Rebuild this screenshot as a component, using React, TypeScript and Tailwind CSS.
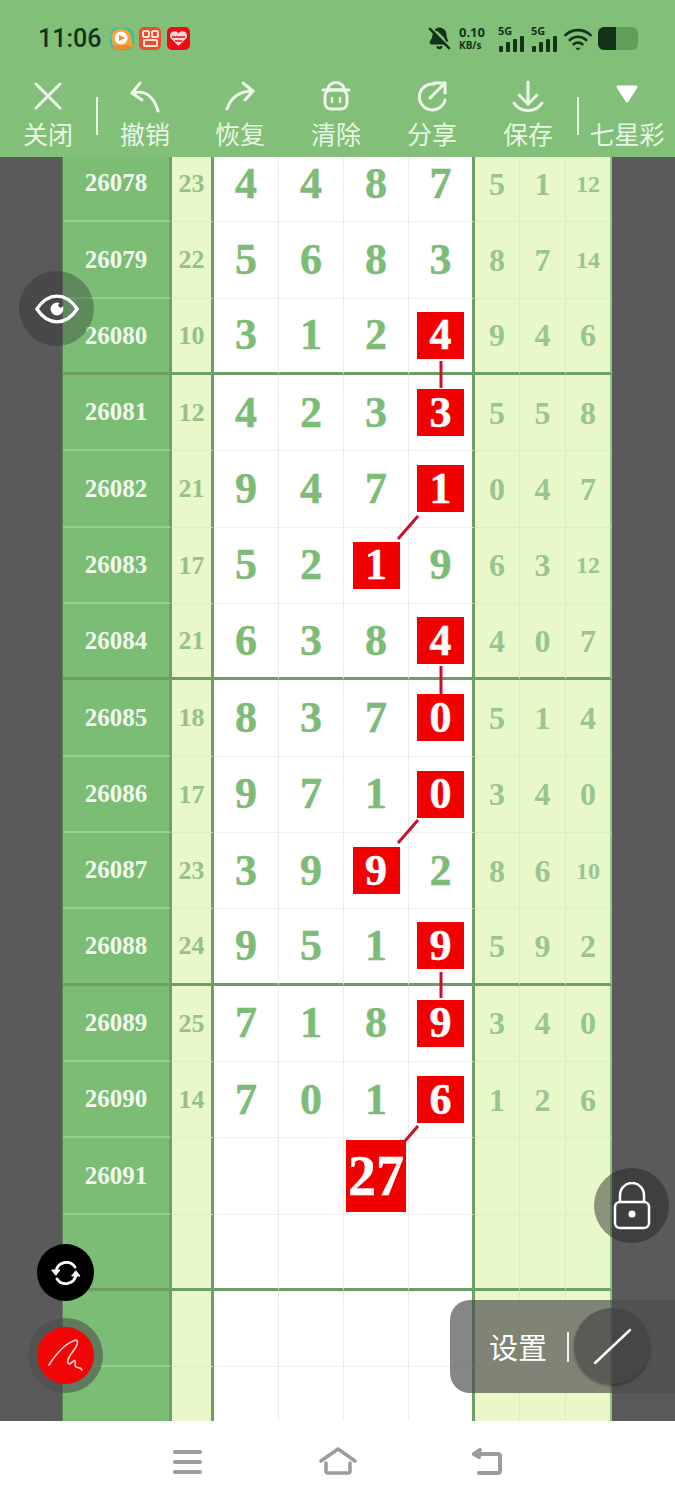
import { BellOff } from 'lucide-react'

type Row = { id?: string; sum?: string; main?: string[]; side?: string[]; hit?: number }

const rows: Row[] = [
  { id: '26078', sum: '23', main: ['4', '4', '8', '7'], side: ['5', '1', '12'] },
  { id: '26079', sum: '22', main: ['5', '6', '8', '3'], side: ['8', '7', '14'] },
  { id: '26080', sum: '10', main: ['3', '1', '2', '4'], side: ['9', '4', '6'], hit: 3 },
  { id: '26081', sum: '12', main: ['4', '2', '3', '3'], side: ['5', '5', '8'], hit: 3 },
  { id: '26082', sum: '21', main: ['9', '4', '7', '1'], side: ['0', '4', '7'], hit: 3 },
  { id: '26083', sum: '17', main: ['5', '2', '1', '9'], side: ['6', '3', '12'], hit: 2 },
  { id: '26084', sum: '21', main: ['6', '3', '8', '4'], side: ['4', '0', '7'], hit: 3 },
  { id: '26085', sum: '18', main: ['8', '3', '7', '0'], side: ['5', '1', '4'], hit: 3 },
  { id: '26086', sum: '17', main: ['9', '7', '1', '0'], side: ['3', '4', '0'], hit: 3 },
  { id: '26087', sum: '23', main: ['3', '9', '9', '2'], side: ['8', '6', '10'], hit: 2 },
  { id: '26088', sum: '24', main: ['9', '5', '1', '9'], side: ['5', '9', '2'], hit: 3 },
  { id: '26089', sum: '25', main: ['7', '1', '8', '9'], side: ['3', '4', '0'], hit: 3 },
  { id: '26090', sum: '14', main: ['7', '0', '1', '6'], side: ['1', '2', '6'], hit: 3 },
  { id: '26091', main: ['', '', '27', ''], side: ['', '', ''], hit: 2 },
  { main: ['', '', '', ''], side: ['', '', ''] },
  { main: ['', '', '', ''], side: ['', '', ''] },
  { main: ['', '', '', ''], side: ['', '', ''] },
]

const thickRows = [2, 6, 10, 14]
const mainWidths = ['w-[65px]', 'w-[65px]', 'w-[65px]', 'w-[66px]']
const sideWidths = ['w-[45px]', 'w-[46px]', 'w-[46px]']

const links = [
  [441, 204, 441, 231],
  [418, 359, 398, 382],
  [441, 509, 441, 537],
  [418, 663, 398, 686],
  [441, 815, 441, 841],
  [418, 969, 405, 984],
]

function Tool({ label, width, children }: { label: string; width: string; children: React.ReactNode }) {
  return (
    <div className={`${width} flex flex-col items-center shrink-0`}>
      <svg width="40" height="38" viewBox="0 0 40 38" fill="none" stroke="#eef7ea" strokeWidth="3" strokeLinecap="round" strokeLinejoin="round">
        {children}
      </svg>
      <span className="text-[25px] leading-[36px] text-[#e9f5e5] whitespace-nowrap">{label}</span>
    </div>
  )
}

function Signal() {
  return (
    <div className="w-[27px] flex flex-col">
      <span className="h-[11px] text-[11px] leading-[11px] font-bold font-['Noto_Sans',sans-serif]">5G</span>
      <svg width="27" height="16" viewBox="0 0 27 16" fill="#12331a">
        <rect x="1" y="10" width="4" height="6" rx="1" />
        <rect x="8" y="6" width="4" height="10" rx="1" />
        <rect x="15" y="3" width="4" height="13" rx="1" />
        <rect x="22" y="0" width="4" height="16" rx="1" />
      </svg>
    </div>
  )
}

function TableRow({ row, index }: { row: Row; index: number }) {
  const thick = thickRows.includes(index)
  const line = thick ? 'border-b-[3px] border-b-[#6f9f66]' : 'border-b border-b-[#f0f0f0]'
  const greenLine = thick ? 'border-b-[3px] border-b-[#6f9f66]' : 'border-b-2 border-b-[#97d08f]'
  const paleLine = thick ? 'border-b-[3px] border-b-[#6f9f66]' : 'border-b border-b-[#dfefc4]'
  return (
    <div className="flex h-[76.33px] shrink-0">
      <div className="w-[63px] shrink-0 bg-[#5a5a5a] border-r border-r-[#5f7f5a]" />
      <div className={`w-[109px] shrink-0 flex items-center justify-center bg-[#7cbd75] border-r-[3px] border-r-[#6f9f66] text-[25px] font-bold text-[#f2f9ee] ${greenLine}`}>
        {row.id}
      </div>
      <div className={`w-[42px] shrink-0 flex items-center justify-center bg-[#e8f8c8] border-r-[3px] border-r-[#6f9f66] text-[26px] font-bold text-[#98bf8a] ${paleLine}`}>
        {row.sum}
      </div>
      {row.main?.map((n, i) => {
        const borderR = i === 3 ? 'border-r-[3px] border-r-[#6f9f66]' : 'border-r border-r-[#ebebeb]'
        const big = n === '27'
        return (
          <div key={i} className={`${mainWidths[i]} shrink-0 flex items-center justify-center bg-white text-[44px] font-bold text-[#7dbc77] [-webkit-text-stroke:0.5px_currentColor] ${borderR} ${line}`}>
            {row.hit === i ? (
              big ? (
                <span className="w-[60px] h-[72px] flex items-center justify-center bg-[#f20000] text-white text-[56px]">{n}</span>
              ) : (
                <span className="w-[47px] h-[47px] flex items-center justify-center bg-[#f20000] text-white">{n}</span>
              )
            ) : (
              n
            )}
          </div>
        )
      })}
      {row.side?.map((n, i) => {
        const borderR = i === 2 ? 'border-r-2 border-r-[#8cc97f]' : 'border-r border-r-[#dcedc0]'
        return (
          <div key={i} className={`${sideWidths[i]} shrink-0 flex items-center justify-center bg-[#e8f8c8] font-bold text-[#9ac492] ${n.length > 1 ? 'text-[24px]' : 'text-[32px]'} ${borderR} ${paleLine}`}>
            {n}
          </div>
        )
      })}
      <div className="flex-1 bg-[#5a5a5a]" />
    </div>
  )
}

export default function App() {
  return (
    <div className="relative w-[675px] h-[1500px] flex flex-col overflow-hidden bg-white font-['Noto_Sans_CJK_SC','Noto_Sans',sans-serif]">
      <header className="h-[157px] shrink-0 bg-[#82c07a] flex flex-col">
        <div className="h-[77px] shrink-0 flex items-center pl-[38px] pr-[37px] text-[#12331a]">
          <span className="font-['Roboto',sans-serif] text-[25px] font-medium leading-none">11:06</span>
          <svg className="ml-[9px]" width="82" height="26" viewBox="0 0 82 26">
            <rect x="0" y="2" width="24" height="22" rx="7" fill="#35c0a0" />
            <path d="M1 9a11 11 0 0 1 20 0l2 12H3z" fill="#f7a13c" />
            <circle cx="11" cy="12" r="6.5" fill="#fff" />
            <path d="M9 9l6 3-6 3z" fill="#f08a2c" />
            <rect x="3" y="19" width="17" height="4" rx="2" fill="#f28a2a" />
            <rect x="29" y="1" width="22" height="23" rx="5" fill="#ee4a35" />
            <rect x="33" y="5" width="6" height="6" rx="1.5" fill="none" stroke="#ffe9d0" strokeWidth="2" />
            <rect x="42" y="5" width="6" height="6" rx="1.5" fill="none" stroke="#ffe9d0" strokeWidth="2" />
            <rect x="34" y="14" width="13" height="6" rx="1" fill="none" stroke="#ffe9d0" strokeWidth="2" />
            <rect x="57" y="1" width="23" height="23" rx="5" fill="#ee0a14" />
            <path d="M68.5 20l-8-8a4.5 4.5 0 0 1 8-4.5 4.5 4.5 0 0 1 8 4.5z" fill="#ffd9dc" />
            <path d="M62 11h13M65 15h7" stroke="#ee0a14" strokeWidth="1.6" />
          </svg>
          <div className="flex-1" />
          <BellOff size={23} strokeWidth={2.6} fill="#12331a" className="mr-[8px]" />
          <div className="w-[36px] flex flex-col font-['Noto_Sans',sans-serif] font-bold">
            <span className="h-[14px] text-[13px] leading-[14px]">0.10</span>
            <span className="h-[13px] text-[10px] leading-[13px]">KB/s</span>
          </div>
          <div className="ml-[3px]"><Signal /></div>
          <div className="ml-[6px]"><Signal /></div>
          <svg className="ml-[6px]" width="28" height="24" viewBox="0 0 29 24" fill="none" stroke="#12331a" strokeWidth="2.8" strokeLinecap="round">
            <path d="M1.5 8a19 19 0 0 1 26 0" />
            <path d="M6 13a12.5 12.5 0 0 1 17 0" />
            <path d="M10 17.5a6.5 6.5 0 0 1 9 0" />
            <path d="M14.5 24l-3-3h6z" fill="#12331a" strokeWidth="0" />
          </svg>
          <div className="ml-[6px] w-[40px] h-[23px] flex rounded-[6px] overflow-hidden bg-[#5f9f5a]">
            <div className="w-[18px] bg-[#12331a]" />
          </div>
        </div>
        <div className="flex relative">
          <Tool label="关闭" width="w-[96px]">
            <path d="M8 7l24 24M32 7L8 31" />
          </Tool>
          <div className="w-[2px] h-[38px] mt-[20px] shrink-0 bg-[#e9f5e5]" />
          <Tool label="撤销" width="w-[94px]">
            <path d="M7 16c12-3 21 1 26 18" />
            <path d="M15 6L7 16l10 7" />
          </Tool>
          <Tool label="恢复" width="w-[96px]">
            <path d="M7 32c4-12 13-18 26-18" />
            <path d="M23 6l10 8-8 9" />
          </Tool>
          <Tool label="清除" width="w-[96px]">
            <path d="M7 13h26" />
            <path d="M12 13c0-10 16-10 16 0" />
            <rect x="9" y="13" width="22" height="19" rx="6" />
            <path d="M16 21v4M24 21v4" strokeWidth="2.5" />
          </Tool>
          <Tool label="分享" width="w-[96px]">
            <path d="M22 7a13 13 0 1 0 11 16" />
            <path d="M18 21L33 6" />
            <path d="M22 6h11v10" />
          </Tool>
          <Tool label="保存" width="w-[96px]">
            <path d="M20 5v22" />
            <path d="M11 18l9 9 9-9" />
            <path d="M6 26c6 10 22 10 28 0" />
          </Tool>
          <div className="w-[2px] h-[38px] mt-[20px] ml-px shrink-0 bg-[#e9f5e5]" />
          <Tool label="七星彩" width="w-[96px]">
            <path d="M11 10h18l-9 14z" fill="#ffffff" stroke="#ffffff" strokeWidth="3" />
          </Tool>
        </div>
      </header>

      <main className="relative h-[1264px] shrink-0 overflow-hidden font-['Liberation_Serif',serif]">
        <div className="flex flex-col -mt-[11px]">
          {rows.map((row, i) => (
            <TableRow key={i} row={row} index={i} />
          ))}
        </div>
        <svg className="absolute inset-0" width="675" height="1264" fill="none" stroke="#c8102e" strokeWidth="3">
          {links.map(([x1, y1, x2, y2], i) => (
            <line key={i} x1={x1} y1={y1} x2={x2} y2={y2} />
          ))}
        </svg>
      </main>

      <nav className="flex-1 bg-white flex items-center pl-[172px] pt-[2px]">
        <svg width="31" height="26" viewBox="0 0 31 26" fill="none" stroke="#9c9c9c" strokeWidth="4" strokeLinecap="round">
          <path d="M3 3h25M3 13h25M3 23h25" />
        </svg>
        <svg className="ml-[116px]" width="38" height="30" viewBox="0 0 38 30" fill="none" stroke="#9c9c9c" strokeWidth="3.5" strokeLinecap="round" strokeLinejoin="round">
          <path d="M2 14L19 2l17 12" />
          <path d="M7 16v8a2 2 0 0 0 2 2h20a2 2 0 0 0 2-2v-8" />
        </svg>
        <svg className="ml-[114px]" width="34" height="30" viewBox="0 0 34 30" fill="none" stroke="#9c9c9c" strokeWidth="4" strokeLinecap="round" strokeLinejoin="round">
          <path d="M3 7h24a2 2 0 0 1 2 2v15a2 2 0 0 1-2 2H8" />
          <path d="M9 3L3 7l5 3" />
        </svg>
      </nav>

      <button className="absolute left-[19px] top-[271px] w-[75px] h-[75px] rounded-full bg-[#28282859] flex items-center justify-center">
        <svg width="44" height="30" viewBox="0 0 48 32" fill="none" stroke="#ffffff" strokeWidth="3.5">
          <path d="M2 16C8 7 15 2 24 2s16 5 22 14c-6 9-13 14-22 14S8 25 2 16z" />
          <circle cx="24" cy="16" r="7" fill="#ffffff" stroke="none" />
          <circle cx="28" cy="12" r="2.5" fill="#4a4f4a" stroke="none" />
        </svg>
      </button>

      <button className="absolute left-[37px] top-[1244px] w-[57px] h-[57px] rounded-full bg-black flex items-center justify-center">
        <svg width="30" height="28" viewBox="0 0 30 28" fill="none" stroke="#ffffff" strokeWidth="2.8" strokeLinecap="round">
          <path d="M5 12a10.5 10.5 0 0 1 19-4" />
          <path d="M25 16a10.5 10.5 0 0 1-19 4" />
          <path d="M1 11h8l-4 5z" fill="#ffffff" strokeWidth="1" />
          <path d="M21 17h8l-4-5z" fill="#ffffff" strokeWidth="1" />
        </svg>
      </button>

      <button className="absolute left-[28px] top-[1318px] w-[75px] h-[75px] rounded-full bg-[#4d4d4d99] flex items-center justify-center">
        <span className="w-[57px] h-[57px] rounded-full bg-[#f20505] flex items-center justify-center">
          <svg width="40" height="36" viewBox="0 0 40 36" fill="none" stroke="#ffc4c4" strokeWidth="1.8" strokeLinecap="round" strokeLinejoin="round">
            <path d="M3 27C10 16 19 5 30 2c4 2-1 9-5 14-2 3-4 7-3 9 2 3 6-4 7-2 1 2-1 5 1 6 2 1 5 0 6 3" />
          </svg>
        </span>
      </button>

      <button className="absolute left-[594px] top-[1168px] w-[75px] h-[75px] rounded-full bg-[#20202077] flex items-center justify-center">
        <svg width="38" height="48" viewBox="0 0 38 48" fill="none" stroke="#ffffff" strokeWidth="2.5">
          <path d="M7 20v-7a12 12 0 0 1 24 0v7" />
          <rect x="2" y="20" width="34" height="26" rx="5" />
          <circle cx="19" cy="32" r="3.5" fill="#ffffff" stroke="none" />
        </svg>
      </button>

      <div className="absolute left-[450px] top-[1300px] w-[225px] h-[93px] rounded-l-[20px] bg-[#4c4c4cad] flex items-center pl-[39px]">
        <span className="text-[29px] leading-none text-white">设置</span>
        <div className="w-[2px] h-[30px] ml-[20px] bg-[#f0f0f0]" />
        <div className="w-[76px] h-[76px] ml-[5px] -mt-[2px] rounded-full bg-[#3f3f3f99] shadow-[0_2px_3px_rgba(0,0,0,0.35)] flex items-center justify-center">
          <svg width="40" height="38" viewBox="0 0 40 38" fill="none" stroke="#ffffff" strokeWidth="2.5" strokeLinecap="round">
            <path d="M3 36L38 3" />
          </svg>
        </div>
      </div>
    </div>
  )
}
